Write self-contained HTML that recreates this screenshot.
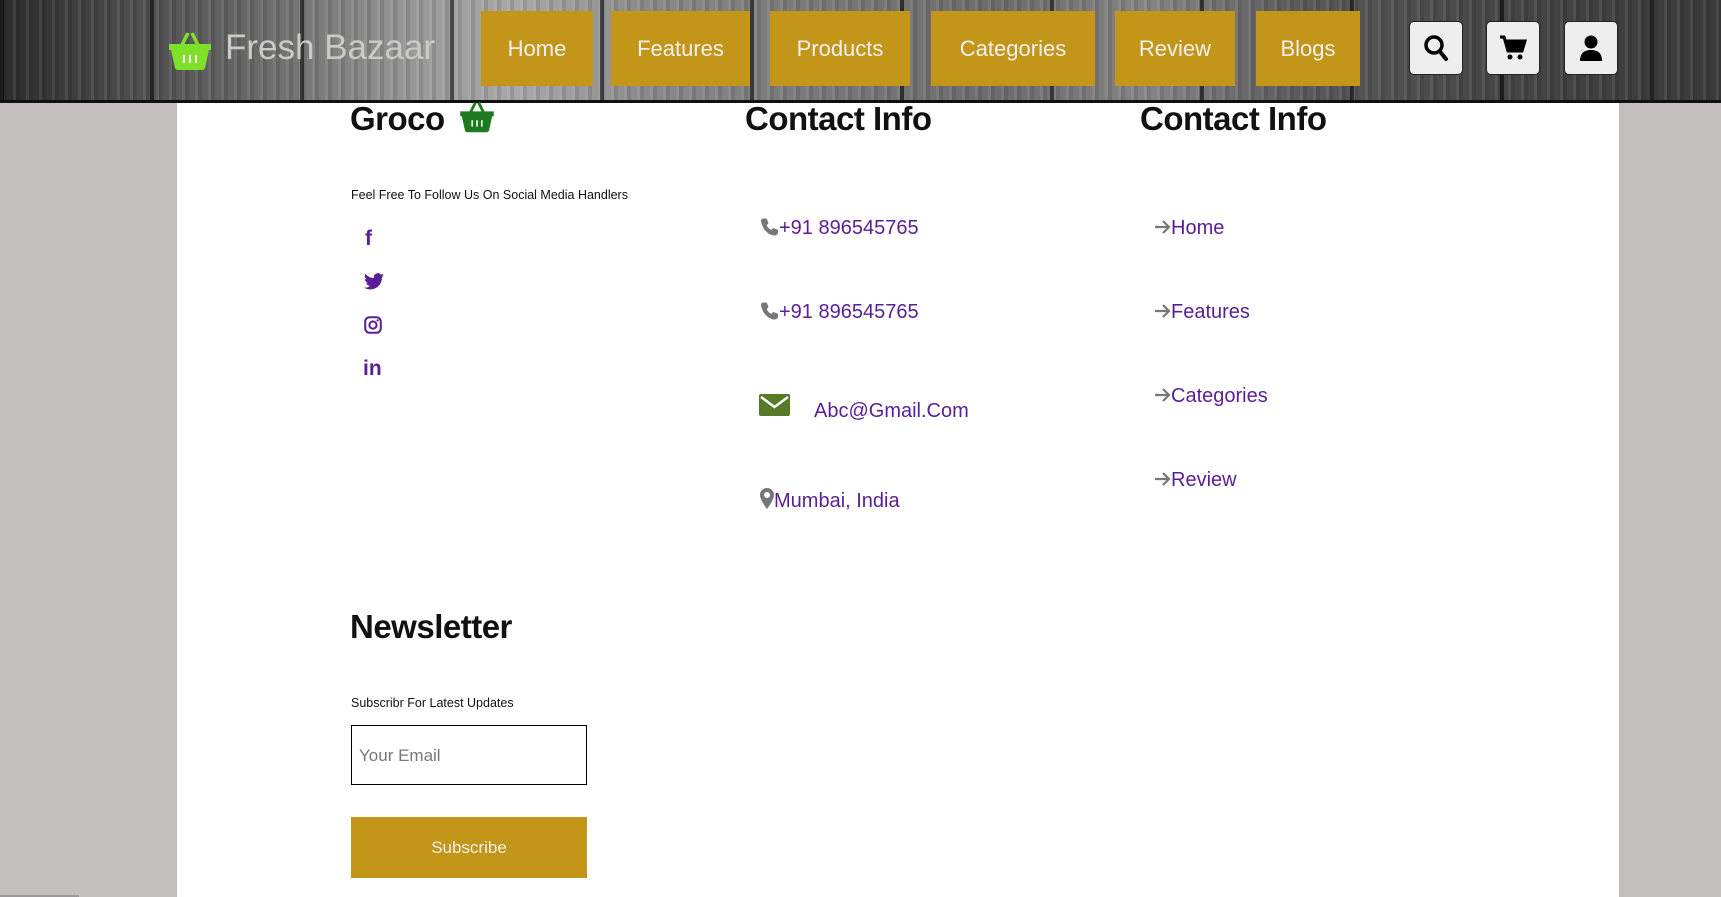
<!DOCTYPE html>
<html><head><meta charset="utf-8"><style>
*{margin:0;padding:0;box-sizing:border-box}
body{width:1721px;height:897px;overflow:hidden;background:#c3bfbe;font-family:"Liberation Sans",sans-serif;position:relative}
.hdr{position:absolute;left:0;top:0;width:1721px;height:103px;border-bottom:3px solid #111;
background:
repeating-linear-gradient(90deg,rgba(0,0,0,.55) 0 4px,transparent 4px 150px),
repeating-linear-gradient(90deg,rgba(255,255,255,.08) 0 3px,rgba(0,0,0,.1) 3px 7px,transparent 7px 13px),
linear-gradient(90deg,#2b2b2b 0,#4a4a4a 120px,#6a6a6a 260px,#9a9a9a 420px,#a8a8a8 520px,#8a8a8a 650px,#7a7a7a 800px,#6c6c6c 1000px,#858585 1150px,#5a5a5a 1300px,#454545 1500px,#3a3a3a 1721px);}
.nav{position:absolute;top:11px;height:75px;background:#c3961a;color:#f0f0f0;font-size:22px;display:flex;align-items:center;justify-content:center}
.ib{position:absolute;top:21px;width:54px;height:54px;background:#eeeeee;border:1.5px solid #222;border-radius:5px;display:flex;align-items:center;justify-content:center}
.main{position:absolute;left:177px;top:103px;width:1442px;height:794px;background:#fff}
.h{position:absolute;font-size:33px;font-weight:bold;color:#111;letter-spacing:-.5px}
.p{position:absolute;color:#5a1e96;font-size:20px;white-space:nowrap}
.s{position:absolute;font-size:12.5px;color:#111}
.ar{position:absolute}
</style></head><body>
<div class="hdr"></div>
<svg style="position:absolute;left:168px;top:31px" width="44" height="40" viewBox="0 0 44 40"><path d="M14 14 L20 2 M30 14 L24 2" stroke="#7fe02a" stroke-width="3.5" fill="none"/><path d="M1 13h42v6h-2l-4 18q-1 2-3 2H10q-2 0-3-2L3 19H1z" fill="#7fe02a"/><path d="M16 24v8M22 24v8M28 24v8" stroke="#fff" stroke-width="2"/></svg>
<div style="position:absolute;left:225px;top:28px;font-size:35px;color:#cbcbc3">Fresh Bazaar</div>
<div class="nav" style="left:481px;width:112px">Home</div>
<div class="nav" style="left:611px;width:139px">Features</div>
<div class="nav" style="left:770px;width:140px">Products</div>
<div class="nav" style="left:931px;width:164px">Categories</div>
<div class="nav" style="left:1115px;width:120px">Review</div>
<div class="nav" style="left:1256px;width:104px">Blogs</div>
<div class="ib" style="left:1409px"><svg width="26" height="28" viewBox="0 0 26 28"><circle cx="11" cy="11" r="8" stroke="#000" stroke-width="3.5" fill="none"/><path d="M16.5 17L23 25" stroke="#000" stroke-width="4" stroke-linecap="round"/></svg></div>
<div class="ib" style="left:1486px"><svg width="28" height="26" viewBox="0 0 28 26"><path d="M1 2h4l4 14h14l3-10H7" stroke="#000" stroke-width="3" fill="#000"/><path d="M7 6h19l-3 10H9z" fill="#000"/><circle cx="11" cy="22" r="2.5"/><circle cx="21" cy="22" r="2.5"/></svg></div>
<div class="ib" style="left:1564px"><svg width="24" height="28" viewBox="0 0 24 28"><circle cx="12" cy="8" r="6.5"/><path d="M1 27q0-11 11-11t11 11z"/></svg></div>
<div class="main"></div>
<div class="h" style="left:350px;top:100px">Groco</div>
<svg style="position:absolute;left:459px;top:101px" width="36" height="32" viewBox="0 0 44 40"><path d="M14 14 L20 2 M30 14 L24 2" stroke="#1e7a1e" stroke-width="3.5" fill="none"/><path d="M1 13h42v6h-2l-4 18q-1 2-3 2H10q-2 0-3-2L3 19H1z" fill="#1e7a1e"/><path d="M16 24v8M22 24v8M28 24v8" stroke="#fff" stroke-width="2"/></svg>
<div class="h" style="left:745px;top:100px">Contact Info</div>
<div class="h" style="left:1140px;top:100px">Contact Info</div>
<div class="s" style="left:351px;top:188px">Feel Free To Follow Us On Social Media Handlers</div>
<div style="position:absolute;left:365px;top:227px;color:#5a1e96;font-weight:bold;font-size:21px">f</div>
<svg style="position:absolute;left:364px;top:273px" width="20" height="17" viewBox="0 0 24 20"><path fill="#5a1e96" d="M24 2.3c-.9.4-1.8.7-2.8.8 1-.6 1.8-1.6 2.2-2.7-1 .6-2 1-3.1 1.2A4.9 4.9 0 0 0 11.9 6 14 14 0 0 1 1.7.9a4.9 4.9 0 0 0 1.5 6.6c-.8 0-1.600-.3-2.2-.6 0 2.4 1.7 4.4 3.9 4.8-.7.2-1.5.2-2.2.1.6 2 2.4 3.4 4.6 3.4A9.9 9.9 0 0 1 0 17.3 14 14 0 0 0 7.5 19.5c9 0 14-7.5 14-14v-.6c1-.7 1.8-1.6 2.5-2.6z"/></svg>
<svg style="position:absolute;left:364px;top:316px" width="18" height="18" viewBox="0 0 18 18"><rect x="1.2" y="1.2" width="15.6" height="15.6" rx="4.5" fill="none" stroke="#5a1e96" stroke-width="2"/><circle cx="9" cy="9" r="3.6" fill="none" stroke="#5a1e96" stroke-width="2"/><circle cx="13.6" cy="4.4" r="1.1" fill="#5a1e96"/></svg>
<div style="position:absolute;left:363px;top:357px;color:#5a1e96;font-weight:bold;font-size:21px">in</div>
<svg style="position:absolute;left:760px;top:217px" width="19" height="20" viewBox="0 0 20 20"><path fill="#777" d="M4 1l3 0 2 5-2 2q2 4 5 5l2-2 5 2v3q-1 3-4 3Q4 17 1 4q0-3 3-3z"/></svg>
<div class="p" style="left:779px;top:217px">+91 896545765</div>
<svg style="position:absolute;left:760px;top:301px" width="19" height="20" viewBox="0 0 20 20"><path fill="#777" d="M4 1l3 0 2 5-2 2q2 4 5 5l2-2 5 2v3q-1 3-4 3Q4 17 1 4q0-3 3-3z"/></svg>
<div class="p" style="left:779px;top:301px">+91 896545765</div>
<svg style="position:absolute;left:759px;top:394px" width="31" height="22" viewBox="0 0 31 22"><rect width="31" height="22" rx="2" fill="#557a28"/><path d="M2 3l13.5 10L29 3" stroke="#fff" stroke-width="2.5" fill="none"/></svg>
<div class="p" style="left:814px;top:400px">Abc@Gmail.Com</div>
<svg style="position:absolute;left:760px;top:488px" width="14" height="21" viewBox="0 0 14 21"><path fill="#777" d="M7 0a7 7 0 0 0-7 7c0 5 7 14 7 14s7-9 7-14a7 7 0 0 0-7-7zm0 10a3 3 0 1 1 0-6 3 3 0 0 1 0 6z"/></svg>
<div class="p" style="left:774px;top:490px">Mumbai, India</div>
<svg class="ar" style="left:1154px;top:219px" width="17" height="16" viewBox="0 0 17 16"><path d="M1 8h14M9 2l6 6-6 6" stroke="#777" stroke-width="2.2" fill="none"/></svg>
<div class="p" style="left:1171px;top:217px">Home</div>
<svg class="ar" style="left:1154px;top:303px" width="17" height="16" viewBox="0 0 17 16"><path d="M1 8h14M9 2l6 6-6 6" stroke="#777" stroke-width="2.2" fill="none"/></svg>
<div class="p" style="left:1171px;top:301px">Features</div>
<svg class="ar" style="left:1154px;top:387px" width="17" height="16" viewBox="0 0 17 16"><path d="M1 8h14M9 2l6 6-6 6" stroke="#777" stroke-width="2.2" fill="none"/></svg>
<div class="p" style="left:1171px;top:385px">Categories</div>
<svg class="ar" style="left:1154px;top:471px" width="17" height="16" viewBox="0 0 17 16"><path d="M1 8h14M9 2l6 6-6 6" stroke="#777" stroke-width="2.2" fill="none"/></svg>
<div class="p" style="left:1171px;top:469px">Review</div>
<div class="h" style="left:350px;top:608px">Newsletter</div>
<div class="s" style="left:351px;top:696px">Subscribr For Latest Updates</div>
<div style="position:absolute;left:351px;top:725px;width:236px;height:60px;border:1.5px solid #000;background:#fff;font-size:17px;color:#777;padding:20px 0 0 7px">Your Email</div>
<div style="position:absolute;left:351px;top:817px;width:236px;height:61px;background:#c3961a;color:#eee;font-size:17px;display:flex;align-items:center;justify-content:center">Subscribe</div>
<div style="position:absolute;left:0;top:895px;width:79px;height:2px;background:#999"></div>
</body></html>
